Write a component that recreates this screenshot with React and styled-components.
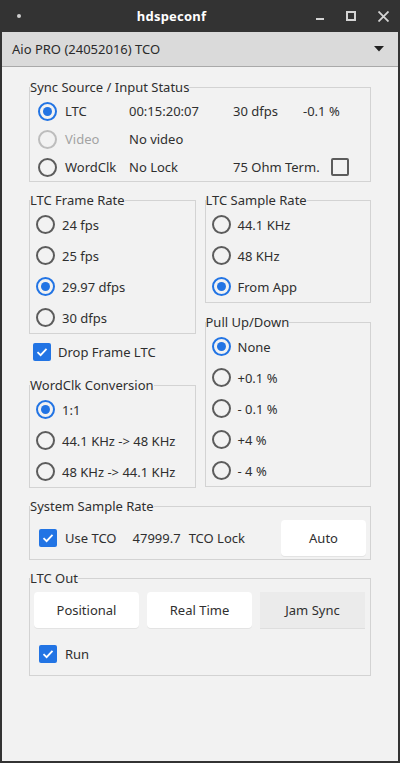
import React from "react";
import styled, { createGlobalStyle } from "styled-components";

const GlobalStyle = createGlobalStyle`
  * {
    box-sizing: border-box;
  }
  body {
    margin: 0;
    background: #333333;
    font-family: "Noto Sans", "DejaVu Sans", sans-serif;
    font-size: 13px;
    color: #2f2f2f;
  }
`;

const BLUE = "#2274e4";

const Window = styled.div`
  width: 400px;
  height: 763px;
  background: #333333;
  padding: 0 2px 2px;
  display: flex;
  flex-direction: column;
`;

const TitleBar = styled.div`
  height: 32px;
  display: flex;
  align-items: center;
  color: #ffffff;
`;

const TitleDot = styled.div`
  width: 4px;
  height: 4px;
  border-radius: 50%;
  background: #cfcfcf;
  margin-left: 15px;
`;

const TitleText = styled.div`
  flex: 1;
  text-align: center;
  font-weight: 700;
  font-size: 13px;
  letter-spacing: 0.2px;
  padding-left: 6px;
`;

const TitleButtons = styled.div`
  display: flex;
  align-items: center;
  gap: 22px;
  margin-right: 9px;
  & svg {
    display: block;
  }
`;

const Surface = styled.div`
  flex: 1;
  background: #f2f2f2;
  display: flex;
  flex-direction: column;
`;

const ComboBox = styled.div`
  height: 35px;
  background: #dadada;
  border-bottom: 1px solid #a9a9a9;
  display: flex;
  align-items: center;
  justify-content: space-between;
  padding: 0 14px 0 10px;
  font-size: 13px;
  color: #2a2a2a;
`;

const Body = styled.div`
  padding: 11px 27px 0;
  display: flex;
  flex-direction: column;
  gap: 9px;
`;

const Group = styled.fieldset`
  margin: 0;
  padding: 0;
  min-width: 0;
  border: 1px solid #d3d3d3;
`;

const Legend = styled.legend`
  padding: 0;
  line-height: 18px;
  font-size: 13px;
  color: #2f2f2f;
`;

const SyncGrid = styled.div`
  display: grid;
  grid-template-columns: 91px 104px 70px 1fr;
  grid-auto-rows: 28px;
  align-items: center;
  padding: 1px 0 0 8px;
`;

const Cell = styled.div`
  display: flex;
  align-items: center;
  gap: ${(p) => p.$gap || 8}px;
  color: ${(p) => (p.$muted ? "#a3a3a3" : "#2f2f2f")};
  grid-column: ${(p) => p.$span || "auto"};
  white-space: nowrap;
`;

const Columns = styled.div`
  display: grid;
  grid-template-columns: 1fr 1fr;
  gap: 9px;
`;

const Column = styled.div`
  display: flex;
  flex-direction: column;
  gap: ${(p) => p.$gap || 0}px;
`;

const RadioList = styled.div`
  display: flex;
  flex-direction: column;
  padding-left: ${(p) => p.$indent || 6}px;
`;

const RadioRow = styled.label`
  height: 31px;
  display: flex;
  align-items: center;
  gap: 7px;
  white-space: nowrap;
`;

const RadioCircle = styled.span`
  width: 19px;
  height: 19px;
  border-radius: 50%;
  flex: none;
  border: 2px solid
    ${(p) => (p.$checked ? BLUE : p.$disabled ? "#bdbdbd" : "#5c5c5c")};
  display: flex;
  align-items: center;
  justify-content: center;
  &::after {
    content: "";
    width: 9px;
    height: 9px;
    border-radius: 50%;
    background: ${(p) => (p.$checked ? BLUE : "transparent")};
  }
`;

const CheckBox = styled.span`
  width: 18px;
  height: 18px;
  flex: none;
  border-radius: 2px;
  background: ${(p) => (p.$checked ? BLUE : "transparent")};
  border: ${(p) => (p.$checked ? "none" : "2px solid #5c5c5c")};
  display: flex;
  align-items: center;
  justify-content: center;
`;

const CheckRow = styled.label`
  display: flex;
  align-items: center;
  gap: ${(p) => p.$gap || 8}px;
  height: ${(p) => p.$height || 36}px;
  padding-left: ${(p) => p.$indent || 0}px;
  white-space: nowrap;
`;

const SampleRow = styled.div`
  display: flex;
  align-items: center;
  padding: 5px 4px 3px 9px;
`;

const Spacer = styled.div`
  flex: 1;
`;

const Value = styled.span`
  margin-left: ${(p) => p.$ml || 0}px;
`;

const PushButton = styled.button`
  width: ${(p) => p.$width || 105}px;
  height: 36px;
  border: none;
  border-radius: ${(p) => (p.$pressed ? 0 : 4)}px;
  background: ${(p) => (p.$pressed ? "#ebebeb" : "#ffffff")};
  box-shadow: 0 1px 0 ${(p) => (p.$pressed ? "#dedede" : "#e3e3e3")};
  font-family: inherit;
  font-size: 13px;
  color: #2f2f2f;
  padding: 0;
`;

const ButtonRow = styled.div`
  display: flex;
  gap: 8px;
  padding: 5px 4px 0;
`;

const RunRow = styled.div`
  padding: 8px 0 3px;
`;

const Radio = ({ label, checked, disabled }) => (
  <RadioRow>
    <RadioCircle $checked={checked} $disabled={disabled} />
    <span style={disabled ? { color: "#a3a3a3" } : undefined}>{label}</span>
  </RadioRow>
);

const Check = ({ checked }) => (
  <CheckBox $checked={checked}>
    {checked && (
      <svg width="12" height="10" viewBox="0 0 12 10">
        <path
          d="M1.5 5.2 L4.6 8.2 L10.5 1.8"
          fill="none"
          stroke="#ffffff"
          strokeWidth="1.8"
        />
      </svg>
    )}
  </CheckBox>
);

const RadioGroup = ({ title, items, checked, indent }) => (
  <Group>
    <Legend>{title}</Legend>
    <RadioList $indent={indent}>
      {items.map((item) => (
        <Radio key={item} label={item} checked={item === checked} />
      ))}
    </RadioList>
  </Group>
);

const App = () => {
  return (
    <>
      <GlobalStyle />
      <Window>
        <TitleBar>
          <TitleDot />
          <TitleText>hdspeconf</TitleText>
          <TitleButtons>
            <svg width="8" height="12" viewBox="0 0 8 12">
              <rect x="0" y="8" width="8" height="2" fill="#d4d4d4" />
            </svg>
            <svg width="10" height="12" viewBox="0 0 10 12">
              <rect
                x="1"
                y="2"
                width="8"
                height="8"
                fill="none"
                stroke="#d4d4d4"
                strokeWidth="2"
              />
            </svg>
            <svg width="11" height="11" viewBox="0 0 11 11">
              <path
                d="M0.5 0.5 L10.5 10.5 M10.5 0.5 L0.5 10.5"
                stroke="#d4d4d4"
                strokeWidth="1.8"
              />
            </svg>
          </TitleButtons>
        </TitleBar>
        <Surface>
          <ComboBox>
            <span>Aio PRO (24052016) TCO</span>
            <svg width="10" height="6" viewBox="0 0 10 6">
              <path d="M0 0 L10 0 L5 5.5 Z" fill="#222222" />
            </svg>
          </ComboBox>
          <Body>
            <Group>
              <Legend>Sync Source / Input Status</Legend>
              <SyncGrid>
                <Cell>
                  <RadioCircle $checked />
                  LTC
                </Cell>
                <Cell>00:15:20:07</Cell>
                <Cell>30 dfps</Cell>
                <Cell>-0.1 %</Cell>
                <Cell $muted>
                  <RadioCircle $disabled />
                  Video
                </Cell>
                <Cell $span="2 / 5">No video</Cell>
                <Cell>
                  <RadioCircle />
                  WordClk
                </Cell>
                <Cell>No Lock</Cell>
                <Cell $span="3 / 5" $gap={11}>
                  75 Ohm Term.
                  <Check />
                </Cell>
              </SyncGrid>
            </Group>

            <Columns>
              <Column>
                <RadioGroup
                  title="LTC Frame Rate"
                  items={["24 fps", "25 fps", "29.97 dfps", "30 dfps"]}
                  checked="29.97 dfps"
                />
                <CheckRow $indent={4} $gap={7} $height={36}>
                  <Check checked />
                  Drop Frame LTC
                </CheckRow>
                <div style={{ height: 6 }} />
                <RadioGroup
                  title="WordClk Conversion"
                  items={["1:1", "44.1 KHz -> 48 KHz", "48 KHz -> 44.1 KHz"]}
                  checked="1:1"
                />
              </Column>
              <Column $gap={10}>
                <RadioGroup
                  title="LTC Sample Rate"
                  items={["44.1 KHz", "48 KHz", "From App"]}
                  checked="From App"
                />
                <RadioGroup
                  title="Pull Up/Down"
                  items={["None", "+0.1 %", "- 0.1 %", "+4 %", "- 4 %"]}
                  checked="None"
                />
              </Column>
            </Columns>

            <Group>
              <Legend>System Sample Rate</Legend>
              <SampleRow>
                <CheckRow $gap={8} $height={36}>
                  <Check checked />
                  Use TCO
                </CheckRow>
                <Value $ml={16}>47999.7</Value>
                <Value $ml={8}>TCO Lock</Value>
                <Spacer />
                <PushButton $width={85}>Auto</PushButton>
              </SampleRow>
            </Group>

            <Group>
              <Legend>LTC Out</Legend>
              <ButtonRow>
                <PushButton>Positional</PushButton>
                <PushButton>Real Time</PushButton>
                <PushButton $pressed>Jam Sync</PushButton>
              </ButtonRow>
              <RunRow>
                <CheckRow $indent={9} $gap={8} $height={36}>
                  <Check checked />
                  Run
                </CheckRow>
              </RunRow>
            </Group>
          </Body>
        </Surface>
      </Window>
    </>
  );
};

export default App;
